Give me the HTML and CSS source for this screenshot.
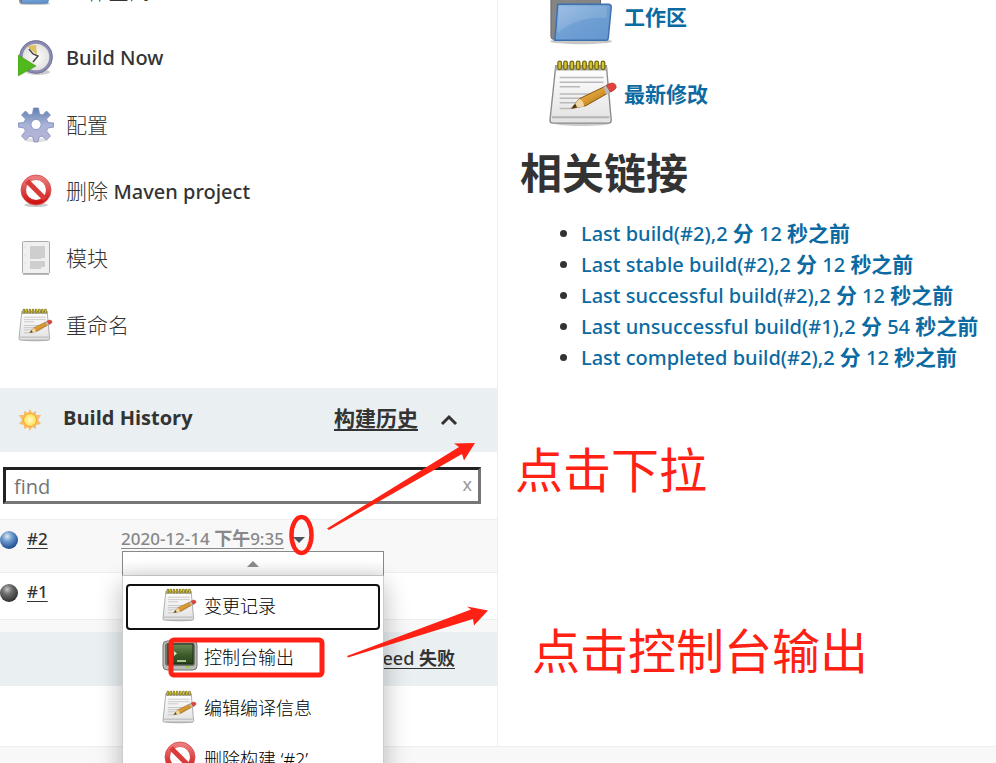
FILE: index.html
```html
<!DOCTYPE html>
<html lang="zh-CN">
<head>
<meta charset="utf-8">
<title>Maven project</title>
<link rel="stylesheet" href="styles.css">
</head>
<body>
<svg class="defs" aria-hidden="true">
  <defs>
    <linearGradient id="paper" x1="0" y1="0" x2="0" y2="1"><stop offset="0" stop-color="#fff"/><stop offset="1" stop-color="#e2e2e2"/></linearGradient>
    <linearGradient id="blueFolder" x1="0" y1="0" x2="1" y2="1"><stop offset="0" stop-color="#91b7e2"/><stop offset=".5" stop-color="#6f9fd3"/><stop offset="1" stop-color="#6496cf"/></linearGradient>
    <linearGradient id="gearFill" x1="0" y1="0" x2="0" y2="1"><stop offset="0" stop-color="#5f7fb0"/><stop offset=".5" stop-color="#a9b4d8"/><stop offset="1" stop-color="#b9b3d6"/></linearGradient>
    <linearGradient id="redFill" x1="0" y1="0" x2="0" y2="1"><stop offset="0" stop-color="#ea7c7c"/><stop offset="1" stop-color="#d01414"/></linearGradient>
    <radialGradient id="blueBall" cx=".4" cy=".3" r=".7"><stop offset="0" stop-color="#dfe9ec"/><stop offset=".4" stop-color="#6e9bd0"/><stop offset="1" stop-color="#1e4c8c"/></radialGradient>
    <radialGradient id="greyBall" cx=".4" cy=".3" r=".7"><stop offset="0" stop-color="#c4c4c4"/><stop offset=".4" stop-color="#6c6c6c"/><stop offset="1" stop-color="#303030"/></radialGradient>
    <radialGradient id="sunFill"><stop offset="0" stop-color="#fffbd0"/><stop offset="1" stop-color="#fbe14a"/></radialGradient>
    <radialGradient id="face"><stop offset="0" stop-color="#fff"/><stop offset="1" stop-color="#dededb"/></radialGradient>
    <linearGradient id="screen" x1="0" y1="0" x2="0" y2="1"><stop offset="0" stop-color="#6d8a58"/><stop offset=".5" stop-color="#3f5f2c"/><stop offset="1" stop-color="#27401a"/></linearGradient>
    <linearGradient id="pencil" x1="0" y1="0" x2="1" y2="1"><stop offset="0" stop-color="#efc56c"/><stop offset=".5" stop-color="#d99a32"/><stop offset="1" stop-color="#8f5a10"/></linearGradient>
    <symbol id="notepad" viewBox="0 -2 74 74">
      <ellipse cx="35" cy="66" rx="29" ry="3" fill="#000" opacity=".2"/>
      <path d="M8 7h52l5 56q0 3-3 3H5q-3 0-3-3z" fill="url(#paper)" stroke="#8b8b8b" stroke-width="1.4"/>
      <path d="M8 7h52l1 5H7z" fill="#a9a9a9"/>
      <path d="M4 60h59" stroke="#b3b3b3" stroke-width="2"/>
      <path d="M12 19h45M12 24h45M12 28.500h21M12 36h33M12 40.500h28M12 45h18M12 51h12" stroke="#b9b9b9" stroke-width="1.500"/>
      <path d="M12 4v5M18 4v5M24.500 4v5M31 4v5M37.500 4v5M44 4v5M50 4v5M56.500 4v5" stroke="#766b10" stroke-width="5" stroke-linecap="round"/>
      <path d="M12 4v5M18 4v5M24.500 4v5M31 4v5M37.500 4v5M44 4v5M50 4v5M56.500 4v5" stroke="#d6c332" stroke-width="2.400" stroke-linecap="round"/>
      <path d="M24 51l8-10 29-14q6-1 6 5L39 48z" fill="url(#pencil)" stroke="#835511" stroke-width="1"/>
      <path d="M24 51l8-10q5 2 5 8z" fill="#efd6a2"/><path d="M24 51l4-5 2 4z" fill="#4d3515"/>
      <path d="M57 29l4-2 3 7-4 3z" fill="#bbb"/>
      <path d="M60 27q8-5 10 1 1 3-6 6z" fill="#e3423f" stroke="#a93b32" stroke-width=".7"/>
    </symbol>
    <symbol id="noentry" viewBox="0 0 36 36">
      <ellipse cx="18" cy="32" rx="12" ry="2" fill="#000" opacity=".2"/>
      <circle cx="18" cy="17" r="12.500" fill="#fff" stroke="url(#redFill)" stroke-width="5"/>
      <path d="M9 8l18 18" stroke="#d93a3a" stroke-width="5"/>
      <circle cx="18" cy="17" r="15" fill="none" stroke="#d54a4a" stroke-width=".8"/>
    </symbol>
    <symbol id="folder" viewBox="0 0 74 74">
      <ellipse cx="34" cy="63" rx="32" ry="3" fill="#000" opacity=".22"/>
      <path d="M3 12q0-2 3-2h18l4 5h26v46H6q-3 0-3-3z" fill="#858585" stroke="#666"/>
      <path d="M10 25h52q3 0 3 3l-3 31q0 3-3 3H7z" fill="url(#blueFolder)" stroke="#3d70ae" stroke-width="1.500"/>
      <path d="M11 27h50l-1 12Q30 37 10 54z" fill="#fff" opacity=".13"/>
    </symbol>
  </defs>
</svg>

<div class="page">
  <div class="columns">
    <aside class="side">
      <nav class="tasks">
        <a href="#"><svg class="icon"><use href="#folder"/></svg><span>工作空间</span></a>
        <a href="#"><svg class="icon" viewBox="0 0 36 36">
          <ellipse cx="20" cy="32" rx="12" ry="3" fill="#000" opacity=".2"/>
          <circle cx="18" cy="17" r="15" fill="url(#face)" stroke="#8b8bb2" stroke-width="3.400"/>
          <circle cx="18" cy="17" r="16.400" fill="none" stroke="#65658c" stroke-width=".6"/>
          <path d="M9 6l9-1 1 10z" fill="#dfc05b"/><path d="M11 9l4 5 5 2-5 6" fill="none" stroke="#4b4b4b" stroke-width="1.500"/>
          <path d="M0 15l18 11-18 10z" fill="#52b91d" stroke="#3a9411" stroke-width=".6"/></svg><span><b>Build Now</b></span></a>
        <a href="#"><svg class="icon" viewBox="0 0 36 36">
          <ellipse cx="18" cy="33" rx="12" ry="2" fill="#000" opacity=".12"/>
          <path fill="url(#gearFill)" stroke="#7f8cba" stroke-width=".8" stroke-linejoin="round" fill-rule="evenodd" d="M15.500 1h5l1 6 3 1 4-4 4 4-4 4 1.500 3.500 6 .5v4l-6 1-1.500 3 4 5-4 4-4.500-4-3 1-1 5h-4l-1-5-3-1-4.500 4-4-4 4-5-1.500-3-6-1v-4l6-.5L7.500 12l-4-4 4-4 4 4 3-1zM18 12.500a5 5 0 1 0 .1 0z"/></svg><span>配置</span></a>
        <a href="#"><svg class="icon"><use href="#noentry"/></svg><span>删除 <b>Maven project</b></span></a>
        <a href="#"><svg class="icon" viewBox="0 0 36 36">
          <rect x="4.500" y="1.500" width="27" height="32" rx="1" fill="#f0f0f0" stroke="#aaa"/>
          <path d="M5 34.500h26" stroke="#777" opacity=".5"/>
          <path d="M12 6h15v12h-4v1H12zM12 21h15v6h-4v2H12z" fill="#cecece"/><path d="M7 6v24" stroke="#ddd" stroke-dasharray="2 6"/></svg><span>模块</span></a>
        <a href="#"><svg class="icon"><use href="#notepad"/></svg><span>重命名</span></a>
      </nav>

      <section class="history">
        <header class="history-head">
          <svg class="sun" viewBox="0 0 24 24"><path d="M12 1l2 4 4-2v4l5 0-3 5 3 4-5 1v4l-4-2-2 4-2-4-4 2v-4l-5-1 3-4-3-5 5 0V3l4 2z" fill="#f7bb6a"/><circle cx="12" cy="12" r="6.500" fill="url(#sunFill)" stroke="#f3a63a"/></svg>
          <h2>Build History</h2>
          <a href="#">构建历史</a>
          <svg class="chevron" viewBox="0 0 18 12"><path d="M2 10l7-7 7 7" fill="none" stroke="#333" stroke-width="3"/></svg>
        </header>
        <div class="search">
          <input type="text" placeholder="find" aria-label="find">
          <button type="button" class="clear">x</button>
        </div>
        <div class="build current">
          <svg class="ball" viewBox="0 0 20 20"><circle cx="10" cy="10" r="9" fill="url(#blueBall)"/></svg>
          <a href="#" class="num">#2</a>
          <a href="#" class="date">2020-12-14 <b>下午</b>9:35</a>
          <button type="button" class="caret" aria-label="menu"><svg viewBox="0 0 14 8"><path d="M1 1h12L7 7z" fill="#4d545d"/></svg></button>
          <div class="popup">
            <div class="popup-tip"><svg viewBox="0 0 12 6"><path d="M0 6h12L6 0z" fill="#888"/></svg></div>
            <ul class="menu">
              <li><a href="#" class="focused"><svg class="icon"><use href="#notepad"/></svg>变更记录</a></li>
              <li><a href="#"><svg class="icon" viewBox="0 0 36 36">
                <rect x="1" y="3" width="34" height="29" rx="4" fill="#b9bab5" stroke="#777"/><rect x="3" y="5" width="30" height="23" rx="3" fill="#73756f"/>
                <rect x="6" y="6" width="25" height="20" fill="url(#screen)" stroke="#1f2b18"/><path d="M12 13l3 2.500-3 2.500z" fill="#cfe8bd"/><path d="M15 23h9" stroke="#a4c78e" stroke-width="2"/><path d="M24 29h3" stroke="#8ccf3c" stroke-width="2"/></svg>控制台输出</a></li>
              <li><a href="#"><svg class="icon"><use href="#notepad"/></svg>编辑编译信息</a></li>
              <li><a href="#"><svg class="icon"><use href="#noentry"/></svg>删除构建 ‘#2’</a></li>
            </ul>
          </div>
        </div>
        <div class="build">
          <svg class="ball" viewBox="0 0 20 20"><circle cx="10" cy="10" r="9" fill="url(#greyBall)"/></svg>
          <a href="#" class="num">#1</a>
        </div>
        <div class="spacer"></div>
        <footer class="feeds"><a href="#">Atom feed <b>失败</b></a></footer>
      </section>
    </aside>

    <main class="main">
      <a class="big-link" href="#"><svg><use href="#folder"/></svg><span>工作区</span></a>
      <a class="big-link" href="#"><svg><use href="#notepad"/></svg><span>最新修改</span></a>
      <h1>相关链接</h1>
      <ul class="permalinks">
        <li><a href="#">Last build(#2),2 <b>分</b> 12 <b>秒之前</b></a></li>
        <li><a href="#">Last stable build(#2),2 <b>分</b> 12 <b>秒之前</b></a></li>
        <li><a href="#">Last successful build(#2),2 <b>分</b> 12 <b>秒之前</b></a></li>
        <li><a href="#">Last unsuccessful build(#1),2 <b>分</b> 54 <b>秒之前</b></a></li>
        <li><a href="#">Last completed build(#2),2 <b>分</b> 12 <b>秒之前</b></a></li>
      </ul>
    </main>
  </div>
  <div class="page-foot"></div>

  <svg class="marks" viewBox="0 0 996 763" width="996" height="763" aria-hidden="true">
    <g fill="#ff2113">
      <path d="M327 528.500L459 447 454 443.500 475 443 464 460.500 462 454 329 530z"/>
      <path d="M347 656L471 609.500 467 606.500 488 610.500 474 625.500 473 619 348 657.500z"/>
    </g>
    <g fill="none" stroke="#ff2113">
      <ellipse cx="301.500" cy="535" rx="10" ry="18" stroke-width="4.500"/>
      <rect x="171" y="640" width="151" height="35" rx="3" stroke-width="5"/>
    </g>
  </svg>
  <p class="note note-first">点击下拉</p>
  <p class="note note-second">点击控制台输出</p>
</div>
</body>
</html>
```
FILE: styles.css
```css
* { box-sizing: border-box; }

body {
  margin: 0;
  color: #333;
  background: #fff;
  font-family: "Noto Sans", "Noto Sans CJK SC", sans-serif;
  font-size: 20px;
}

a { color: inherit; text-decoration: none; }
ul { list-style: none; margin: 0; padding: 0; }
b { font-weight: 700; }
button { border: 0; padding: 0; background: none; font: inherit; }
svg { display: block; flex: none; }

.defs { position: absolute; width: 0; height: 0; }

.page {
  position: relative;
  display: flex;
  flex-direction: column;
  height: 100vh;
  overflow: hidden;
}

.columns { display: flex; height: 746px; flex: none; }

.side {
  width: 50%;
  flex: none;
  border-right: 1px solid #eaeff2;
}

.page-foot {
  flex: 1;
  background: #f8f8f8;
  border-top: 1px solid #eaeff2;
}

.icon { width: 36px; height: 36px; }

.tasks {
  display: grid;
  grid-template-rows: repeat(6, 1fr);
  height: 400px;
  margin-top: -42px;
  padding-left: 18px;
}
.tasks a {
  display: flex;
  align-items: center;
  gap: 12px;
}
.tasks span { font-size: 21px; line-height: 28px; font-weight: 300; }
.tasks b { font-size: 20px; font-weight: 500; }

.history { margin-top: 30px; }
.history-head {
  display: flex;
  align-items: center;
  height: 64px;
  padding: 0 39px 0 18px;
  background: #eaeff2;
  font-weight: 700;
}
.history-head h2 { flex: 1; margin: 0 0 0 21px; padding-bottom: 4px; font-family: "Open Sans", sans-serif; font-size: 20px; line-height: 28px; }
.history-head a { padding-bottom: 4px; font-size: 21px; line-height: 28px; text-decoration: underline; text-underline-offset: 3px; }
.sun { width: 24px; height: 24px; }
.chevron { width: 18px; height: 12px; margin-left: 22px; }

.search { position: relative; margin: 15px 16px 15px 3px; }
.search input {
  display: block;
  width: 100%;
  height: 37px;
  padding: 1px 8px 0;
  border: 3px solid;
  border-color: #222 #767676 #767676 #222;
  font-family: "Open Sans", sans-serif;
  font-size: 20px;
  background: #fff;
}
.search input::placeholder { color: #757575; }
.clear { position: absolute; right: 9px; top: 5px; font-size: 18px; line-height: 24px; color: #999; }

.build {
  position: relative;
  display: flex;
  align-items: center;
  height: 46px;
  padding-bottom: 6px;
  font-size: 17px;
  font-weight: 500;
}
.build.current { height: 54px; padding: 0 0 12px; }
.build > a { padding-bottom: 3px; text-decoration: underline; text-underline-offset: 3px; }
.current, .spacer { background: #f8f8f8; border-top: 1px solid #eaeff2; }
.current { border-bottom: 1px solid #eaeff2; }
.spacer { height: 13px; }
.ball { width: 20px; height: 20px; margin-left: -1px; }
.num { width: 94px; margin-left: 8px; }
.date { color: #888; }
.date b { font-size: 18px; line-height: 20px; }
.caret { width: 14px; margin-left: 8px; }

.popup { position: absolute; z-index: 2; left: 122px; top: 31px; width: 262px; }
.popup-tip {
  display: flex;
  align-items: center;
  justify-content: center;
  height: 25px;
  border: 1px solid #888;
  border-bottom: 1px solid #ccc;
  background: linear-gradient(#fff 40%, #f0f0f0);
}
.popup-tip svg { width: 12px; height: 6px; }
.menu {
  padding: 8px 3px;
  border: 1px solid #ccc;
  border-top: 0;
  background: #fff;
  color: #000;
  box-shadow: 0 8px 24px rgba(0, 0, 0, .28);
}
.menu li { margin-bottom: 5px; }
.menu a {
  display: flex;
  align-items: center;
  gap: 6px;
  height: 46px;
  padding: 0 0 4px 34px;
  border: 2px solid transparent;
  border-radius: 4px;
  font-size: 18px;
  font-weight: 300;
}
.menu a.focused { border-color: #101010; }

.feeds {
  display: flex;
  align-items: center;
  justify-content: flex-end;
  height: 54px;
  padding: 0 42px 4px 0;
  background: #eaeff2;
  font-size: 18px;
  font-weight: 500;
}
.feeds a { text-decoration: underline; text-underline-offset: 3px; }

.main { flex: 1; padding-left: 22px; }
.big-link {
  display: flex;
  align-items: center;
  height: 72px;
  gap: 4px;
  margin: 0 0 5px 28px;
  color: #0b6aa2;
  font-size: 21px;
  font-weight: 700;
}
.big-link svg { width: 72px; height: 72px; }
.big-link:first-child { margin-top: -20px; }
.main h1 { margin: 14px 0 15px; font-size: 42px; line-height: 60px; }
.permalinks { padding-left: 61px; list-style: disc; }
.permalinks li { line-height: 31px; font-weight: 500; }
.permalinks b { font-size: 21px; line-height: 28px; }
.permalinks a { color: #0b6aa2; }

.marks { position: absolute; z-index: 3; left: 0; top: 0; pointer-events: none; }
.note {
  position: absolute;
  z-index: 3;
  margin: 0;
  color: #ff2113;
  font-family: "Noto Sans CJK SC", sans-serif;
  font-size: 48px;
  line-height: 60px;
}
.note-first { left: 515px; top: 437px; }
.note-second { left: 532px; top: 618px; }
```
